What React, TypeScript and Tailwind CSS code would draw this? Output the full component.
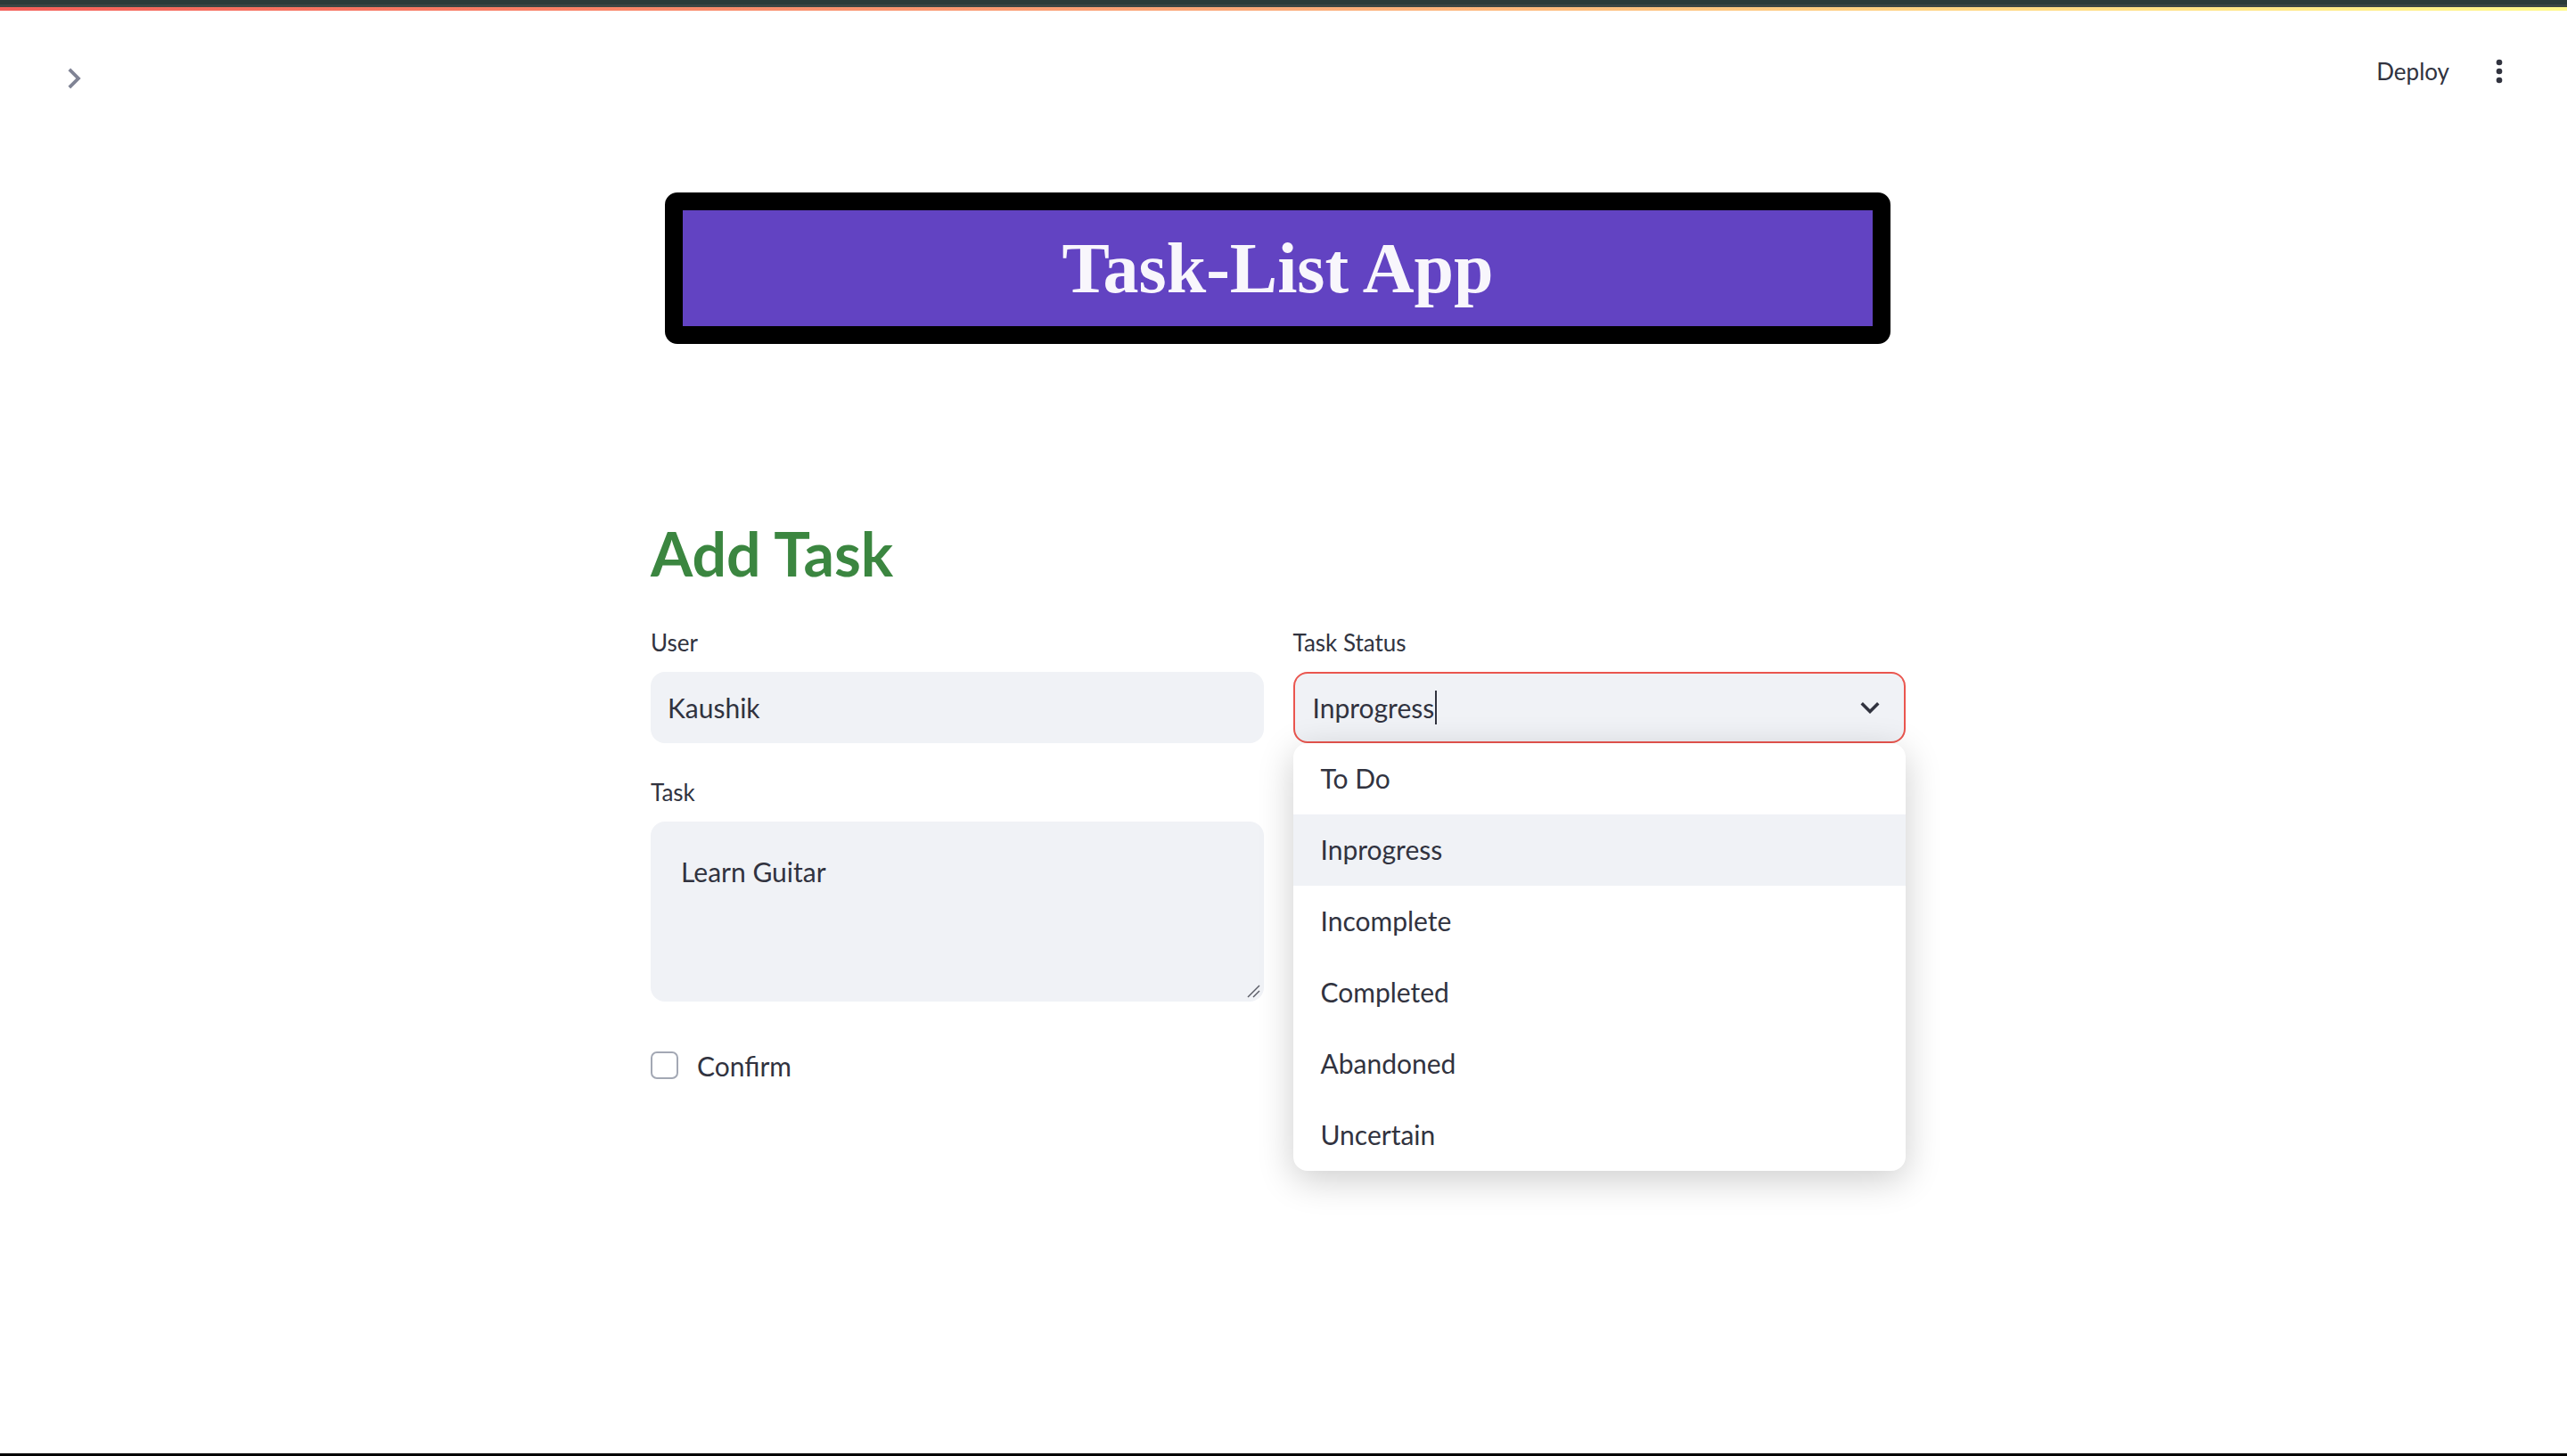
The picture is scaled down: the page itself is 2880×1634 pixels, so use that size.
import React from "react";

const options = ["To Do", "Inprogress", "Incomplete", "Completed", "Abandoned", "Uncertain"];

function Label({ children }: { children: React.ReactNode }) {
  return (
    <div className="h-[36px] text-[26px] leading-[36px] text-[#31333f]">{children}</div>
  );
}

export default function App() {
  return (
    <div className="h-screen w-full bg-white flex flex-col font-['Lato',sans-serif] text-[#31333f] overflow-hidden">
      {/* top strips */}
      <div className="h-[5px] bg-[#2b3b39]" />
      <div className="h-[3px] bg-[#3b4543]" />
      <div className="h-[4px] bg-linear-to-r from-[#f45f59] via-[#fbab79] to-[#fff98a]" />

      {/* header row */}
      <div className="h-[204px] flex items-start justify-between">
        <div className="ml-[60px] mt-[53px]">
          <svg width="46" height="46" viewBox="0 0 24 24" fill="#808495">
            <path d="M10 6L8.59 7.41 13.17 12l-4.58 4.59L10 18l6-6z" />
          </svg>
        </div>
        <div className="mt-[48px] mr-[56px] h-[40px] flex items-center gap-[36px]">
          <span className="text-[26px] leading-none text-[#31333f]">Deploy</span>
          <svg width="40" height="40" viewBox="0 0 24 24" fill="#31333f">
            <circle cx="12" cy="6" r="2" />
            <circle cx="12" cy="12" r="2" />
            <circle cx="12" cy="18" r="2" />
          </svg>
        </div>
      </div>

      {/* content */}
      <div className="flex-1 flex justify-center pr-[12px]">
        <div className="w-[1408px]">
          <div className="ml-[16px] mr-[17px] h-[170px] border-[20px] border-black rounded-[14px] bg-[#6243c2] flex items-center justify-center">
            <span className="font-['Liberation_Serif',serif] font-bold text-[80px] leading-none text-[#f8f6fc]">
              Task-List App
            </span>
          </div>

          <h2 className="mt-[194px] text-[68px] leading-[1.2] font-bold text-[#3b8640]">Add Task</h2>

          <div className="mt-[41px] grid grid-cols-2 gap-x-[33px] items-start">
            {/* left column */}
            <div className="flex flex-col">
              <Label>User</Label>
              <input
                readOnly
                defaultValue="Kaushik"
                className="mt-[15px] h-[80px] w-full rounded-[16px] bg-[#f0f2f6] border-2 border-[#f0f2f6] px-[17px] text-[30px] text-[#31333f] outline-none font-['Lato',sans-serif]"
              />
              <div className="mt-[37px]">
                <Label>Task</Label>
              </div>
              <div className="relative mt-[15px]">
                <textarea
                  readOnly
                  defaultValue="Learn Guitar"
                  className="block h-[202px] w-full rounded-[16px] bg-[#f0f2f6] border-2 border-[#f0f2f6] pl-[32px] pr-[32px] pt-[30px] text-[30px] leading-[1.6] text-[#31333f] outline-none resize-none font-['Lato',sans-serif]"
                />
                <svg
                  className="absolute right-[4px] bottom-[4px]"
                  width="16"
                  height="16"
                  viewBox="0 0 16 16"
                  fill="none"
                  stroke="#5a5c66"
                  strokeWidth="1.4"
                >
                  <line x1="15" y1="2" x2="2" y2="15" />
                  <line x1="15" y1="8" x2="8" y2="15" />
                </svg>
              </div>
              <div className="mt-[52px] h-[40px] flex items-center gap-[21px]">
                <div className="w-[31px] h-[31px] border-2 border-[#a3a8b4] rounded-[7px] bg-white" />
                <span className="text-[30px] leading-none text-[#31333f]">Confirm</span>
              </div>
            </div>

            {/* right column */}
            <div className="flex flex-col">
              <Label>Task Status</Label>
              <div className="relative mt-[15px]">
                <div className="h-[80px] w-full rounded-[16px] bg-[#f0f2f6] border-2 border-[#ea564f] pl-[20px] pr-[17px] flex items-center justify-between">
                  <div className="flex items-center">
                    <span className="text-[30px] leading-none text-[#31333f]">Inprogress</span>
                    <span className="ml-[1px] w-[2px] h-[38px] bg-[#31333f]" />
                  </div>
                  <svg width="42" height="42" viewBox="0 0 24 24" fill="#31333f">
                    <path d="M16.59 8.59L12 13.17 7.41 8.59 6 10l6 6 6-6z" />
                  </svg>
                </div>
                <div className="absolute left-0 right-0 top-[80px] z-10 rounded-[16px] bg-white shadow-[0_10px_40px_rgba(0,0,0,0.2)] overflow-hidden">
                  {options.map((o) => (
                    <div
                      key={o}
                      className={
                        o === "Inprogress"
                          ? "h-[80px] flex items-center pl-[31px] text-[30px] text-[#31333f] bg-[#f0f2f6]"
                          : "h-[80px] flex items-center pl-[31px] text-[30px] text-[#31333f]"
                      }
                    >
                      {o}
                    </div>
                  ))}
                </div>
              </div>
            </div>
          </div>
        </div>
      </div>

      <div className="h-[3px] bg-black" />
    </div>
  );
}
